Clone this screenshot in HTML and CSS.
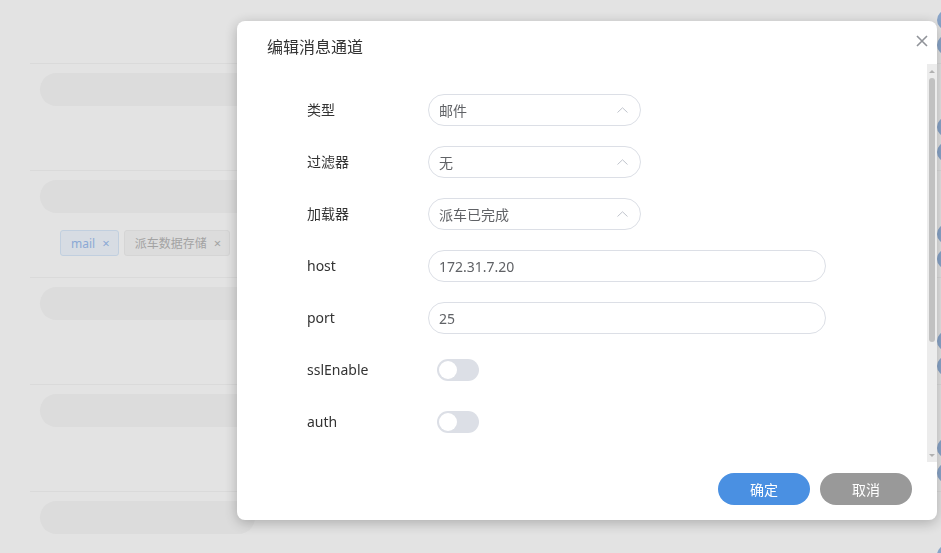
FILE: index.html
```html
<!DOCTYPE html>
<html lang="zh-CN">
<head>
  <meta charset="UTF-8" />
  <title>编辑消息通道</title>
  <link rel="stylesheet" href="styles.css">
</head>
<body>
  <div class="page">
    <ul class="list">
      <li class="item">
        <div class="item-main"><div class="pill"></div></div>
        <div class="avatars"><span></span><span></span></div>
      </li>
      <li class="item">
        <div class="item-main"><div class="pill"></div></div>
        <div class="avatars"><span></span><span></span></div>
      </li>
      <li class="item">
        <div class="item-main">
          <div class="pill"></div>
          <div class="tags">
            <span class="tag tag-blue">mail <i>×</i></span>
            <span class="tag tag-gray">派车数据存储 <i>×</i></span>
          </div>
        </div>
        <div class="avatars"><span></span><span></span></div>
      </li>
      <li class="item">
        <div class="item-main"><div class="pill"></div></div>
        <div class="avatars"><span></span><span></span></div>
      </li>
      <li class="item">
        <div class="item-main"><div class="pill"></div></div>
        <div class="avatars"><span></span><span></span></div>
      </li>
      <li class="item">
        <div class="item-main"><div class="pill"></div></div>
        <div class="avatars"><span></span><span></span></div>
      </li>
    </ul>
  </div>

  <div class="mask"></div>

  <div class="dialog">
    <div class="dialog-header">
      <span class="dialog-title">编辑消息通道</span>
      <button class="dialog-close" aria-label="关闭">
        <svg width="12" height="12" viewBox="0 0 12 12"><path d="M1 1L11 11M11 1L1 11" stroke="#909399" stroke-width="1.6" fill="none"/></svg>
      </button>
    </div>

    <div class="dialog-body">
      <div class="form">
        <div class="form-row">
          <label class="form-label">类型</label>
          <div class="select">邮件<svg class="arrow" width="11" height="6" viewBox="0 0 11 6"><path d="M0.5 5.5L5.5 0.8L10.5 5.5" stroke="#c0c4cc" stroke-width="1" fill="none"/></svg></div>
        </div>
        <div class="form-row">
          <label class="form-label">过滤器</label>
          <div class="select">无<svg class="arrow" width="11" height="6" viewBox="0 0 11 6"><path d="M0.5 5.5L5.5 0.8L10.5 5.5" stroke="#c0c4cc" stroke-width="1" fill="none"/></svg></div>
        </div>
        <div class="form-row">
          <label class="form-label">加载器</label>
          <div class="select">派车已完成<svg class="arrow" width="11" height="6" viewBox="0 0 11 6"><path d="M0.5 5.5L5.5 0.8L10.5 5.5" stroke="#c0c4cc" stroke-width="1" fill="none"/></svg></div>
        </div>
        <div class="form-row">
          <label class="form-label">host</label>
          <input class="input" value="172.31.7.20" />
        </div>
        <div class="form-row">
          <label class="form-label">port</label>
          <input class="input" value="25" />
        </div>
        <div class="form-row">
          <label class="form-label">sslEnable</label>
          <span class="switch"><span class="knob"></span></span>
        </div>
        <div class="form-row">
          <label class="form-label">auth</label>
          <span class="switch"><span class="knob"></span></span>
        </div>
      </div>
      <div class="scrollbar">
        <span class="sb-arrow sb-up"></span>
        <span class="sb-thumb"></span>
        <span class="sb-space"></span>
        <span class="sb-arrow sb-down"></span>
      </div>
    </div>

    <div class="dialog-footer">
      <button class="btn btn-primary">确定</button>
      <button class="btn btn-cancel">取消</button>
    </div>
  </div>
</body>
</html>
```

FILE: styles.css
```css
html, body {
  margin: 0;
  height: 553px;
  overflow: hidden;
}
body {
  background: #fff;
  font-family: "Noto Sans", "Noto Sans CJK SC", sans-serif;
  color: #333;
}
.page {
  height: 553px;
  overflow: hidden;
}
.list {
  list-style: none;
  margin: -44px 0 0;
  padding: 0 0 0 30px;
  width: 940px;
}
.item {
  display: flex;
  height: 106px;
  border-top: 1px solid #f5f5f5;
}
.item-main {
  width: 907px;
  padding: 9px 0 0 10px;
  box-sizing: border-box;
}
.pill {
  width: 215px;
  height: 33px;
  border-radius: 17px;
  background: #f8f8f8;
}
.tags {
  display: flex;
  gap: 5px;
  margin: 17px 0 0 20px;
}
.tag {
  height: 26px;
  line-height: 24px;
  box-sizing: border-box;
  padding: 0 8px 0 10px;
  font-size: 12px;
  border-radius: 3px;
  border: 1px solid;
  white-space: nowrap;
}
.tag i {
  font-style: normal;
  font-size: 13px;
  margin-left: 4px;
}
.tag-blue {
  background: #f2f8ff;
  border-color: #d9e9fb;
  color: #9cbef0;
}
.tag-gray {
  background: #f8f8f8;
  border-color: #f0f0f0;
  color: #b7b7b7;
}
.avatars {
  display: flex;
  flex-direction: column;
  gap: 5px;
  padding-top: 53px;
}
.avatars span {
  width: 20px;
  height: 20px;
  border-radius: 50%;
  background: #9ab9e2;
}

.mask {
  position: fixed;
  inset: 0;
  background: rgba(0, 0, 0, 0.11);
}

.dialog {
  position: fixed;
  left: 237px;
  top: 21px;
  width: 700px;
  height: 499px;
  background: #fff;
  border-radius: 8px;
  box-shadow: 0 3px 14px rgba(0, 0, 0, 0.25);
  display: flex;
  flex-direction: column;
}
.dialog-header {
  height: 43px;
  box-sizing: border-box;
  padding: 15px 30px 0;
}
.dialog-title {
  font-size: 16px;
  line-height: 20px;
  color: #333;
}
.dialog-close {
  position: absolute;
  top: 14px;
  right: 8px;
  width: 14px;
  height: 14px;
  padding: 0;
  border: 0;
  background: none;
}
.dialog-body {
  flex: 1;
  display: flex;
  min-height: 0;
}
.form {
  flex: 1;
  padding: 30px 0 0 70px;
}
.form-row {
  display: flex;
  align-items: center;
  height: 32px;
  margin-bottom: 20px;
}
.form-label {
  width: 121px;
  font-size: 14px;
  line-height: 18px;
  margin-top: -1px;
  color: #333;
}
.select, .input {
  height: 32px;
  box-sizing: border-box;
  border: 1px solid #dcdfe6;
  border-radius: 16px;
  padding: 0 10px;
  font-family: inherit;
  font-size: 14px;
  color: #606266;
  background: #fff;
}
.select {
  width: 213px;
  display: flex;
  align-items: center;
  justify-content: space-between;
  padding-right: 12px;
}
.input {
  width: 398px;
  outline: none;
}
.switch {
  margin-left: 9px;
  width: 42px;
  height: 22px;
  border-radius: 11px;
  background: #dcdfe6;
  display: flex;
  align-items: center;
  padding-left: 2px;
  box-sizing: border-box;
}
.knob {
  width: 18px;
  height: 18px;
  border-radius: 50%;
  background: #fff;
}
.scrollbar {
  width: 10px;
  background: #ececec;
  display: flex;
  flex-direction: column;
  align-items: center;
}
.sb-arrow {
  height: 14px;
  width: 10px;
  display: flex;
  justify-content: center;
  align-items: center;
}
.sb-arrow::before {
  content: "";
  border-left: 3px solid transparent;
  border-right: 3px solid transparent;
}
.sb-up::before {
  border-bottom: 3px solid #b0b0b0;
}
.sb-down::before {
  border-top: 3px solid #b0b0b0;
}
.sb-thumb {
  width: 6px;
  height: 264px;
  border-radius: 3px;
  background: #c1c1c1;
}
.sb-space {
  flex: 1;
}
.dialog-footer {
  height: 58px;
  box-sizing: border-box;
  padding: 11px 25px 0;
  display: flex;
  justify-content: flex-end;
  gap: 10px;
}
.btn {
  width: 92px;
  height: 32px;
  border: 0;
  border-radius: 16px;
  color: #fff;
  font-family: inherit;
  font-size: 14px;
}
.btn-primary {
  background: #4a90e2;
}
.btn-cancel {
  background: #999;
}
```
